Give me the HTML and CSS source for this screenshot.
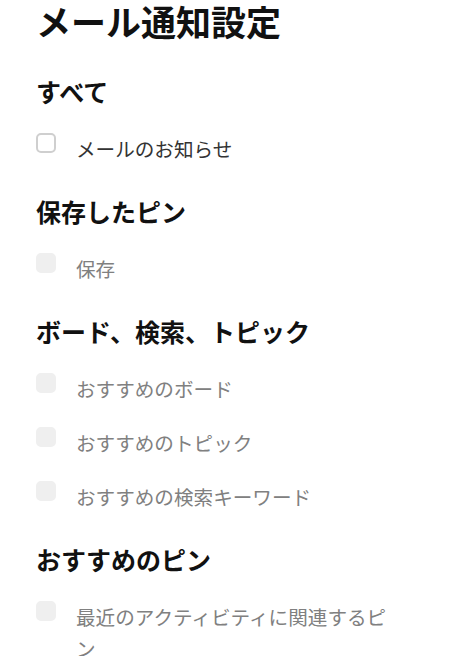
FILE: index.html
```html
<!DOCTYPE html>
<html lang="ja">
<head>
<meta charset="utf-8">
<title>メール通知設定</title>
<link rel="stylesheet" href="styles.css">
</head>
<body>
<main class="page">
  <h1 class="title">メール通知設定</h1>

  <section class="group">
    <h2 class="group-title">すべて</h2>
    <div class="options">
      <label class="option">
        <input class="check" type="checkbox">
        <span class="option-text">メールのお知らせ</span>
      </label>
    </div>
  </section>

  <section class="group">
    <h2 class="group-title">保存したピン</h2>
    <div class="options">
      <label class="option is-disabled">
        <input class="check" type="checkbox" disabled>
        <span class="option-text">保存</span>
      </label>
    </div>
  </section>

  <section class="group">
    <h2 class="group-title">ボード、検索、トピック</h2>
    <div class="options">
      <label class="option is-disabled">
        <input class="check" type="checkbox" disabled>
        <span class="option-text">おすすめのボード</span>
      </label>
      <label class="option is-disabled">
        <input class="check" type="checkbox" disabled>
        <span class="option-text">おすすめのトピック</span>
      </label>
      <label class="option is-disabled">
        <input class="check" type="checkbox" disabled>
        <span class="option-text">おすすめの検索キーワード</span>
      </label>
    </div>
  </section>

  <section class="group">
    <h2 class="group-title">おすすめのピン</h2>
    <div class="options">
      <label class="option is-disabled">
        <input class="check" type="checkbox" disabled>
        <span class="option-text">最近のアクティビティに関連するピン</span>
      </label>
    </div>
  </section>
</main>
</body>
</html>
```

FILE: styles.css
```css
html, body {
  margin: 0;
  padding: 0;
  background: #ffffff;
}

body {
  font-family: "Noto Sans CJK JP", "Noto Sans", "Liberation Sans", sans-serif;
  color: #111111;
}

.page {
  padding: 0 50px 0 36px;
}

.title {
  margin: 0;
  font-size: 35px;
  line-height: 42px;
  font-weight: 700;
  color: #111111;
}

.group {
  margin-top: 30px;
}

.group:first-of-type {
  margin-top: 33px;
}

.group-title {
  margin: 0 0 26px;
  font-size: 25px;
  line-height: 32px;
  font-weight: 700;
  color: #111111;
}

.options {
  display: flex;
  flex-direction: column;
  gap: 22px;
}

.option {
  display: flex;
  align-items: flex-start;
  gap: 20px;
}

.check {
  appearance: none;
  -webkit-appearance: none;
  flex: none;
  box-sizing: border-box;
  width: 20px;
  height: 20px;
  margin: 0;
  border: 2px solid #cfcfcf;
  border-radius: 5px;
  background: #ffffff;
}

.check:disabled {
  border-color: #efefef;
  background: #efefef;
}

.option-text {
  font-size: 19.6px;
  line-height: 32px;
  font-weight: 400;
  color: #333333;
}

.is-disabled .option-text {
  color: #808080;
}
```
